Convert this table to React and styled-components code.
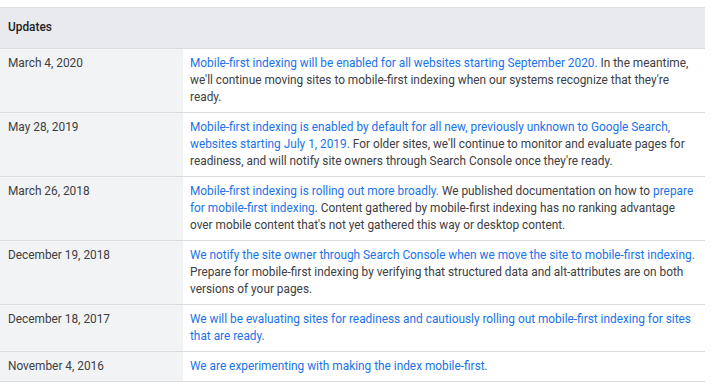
import React from 'react';
import styled, { createGlobalStyle } from 'styled-components';

const GlobalStyle = createGlobalStyle`
  body {
    margin: 0;
    background: #fff;
    font-family: Roboto, "Liberation Sans", sans-serif;
    -webkit-font-smoothing: antialiased;
  }
`;

const Page = styled.div`
  padding-top: 7px;
`;

const Table = styled.table`
  width: 705px;
  border-collapse: collapse;
  font-size: 11.85px;
  line-height: 17px;
  color: #3c4043;
  border-top: 1px solid #e0e0e0;
`;

const HeadCell = styled.th`
  background: #e8eaed;
  text-align: left;
  font-weight: 500;
  color: #202124;
  padding: 11px 8px 12px;
  border-bottom: 1px solid #dadce0;
`;

const Row = styled.tr`
  border-bottom: 1px solid #dadce0;
`;

const DateCell = styled.td`
  width: 167px;
  background: #f1f3f4;
  padding: 6px 8px;
  vertical-align: top;
  color: #3c4043;
`;

const TextCell = styled.td`
  padding: 6px 6px 6px 7px;
  vertical-align: top;
  color: #3c4043;
`;

const Link = styled.a`
  color: #1a73e8;
  text-decoration: none;
`;

const updates = [
  {
    date: 'March 4, 2020',
    body: [
      { link: 'Mobile-first indexing will be enabled for all websites starting September 2020.' },
      " In the meantime, we'll continue moving sites to mobile-first indexing when our systems recognize that they're ready.",
    ],
  },
  {
    date: 'May 28, 2019',
    body: [
      { link: 'Mobile-first indexing is enabled by default for all new, previously unknown to Google Search, websites starting July 1, 2019.' },
      " For older sites, we'll continue to monitor and evaluate pages for readiness, and will notify site owners through Search Console once they're ready.",
    ],
  },
  {
    date: 'March 26, 2018',
    body: [
      { link: 'Mobile-first indexing is rolling out more broadly.' },
      ' We published documentation on how to ',
      { link: 'prepare for mobile-first indexing' },
      ". Content gathered by mobile-first indexing has no ranking advantage over mobile content that's not yet gathered this way or desktop content.",
    ],
  },
  {
    date: 'December 19, 2018',
    body: [
      { link: 'We notify the site owner through Search Console when we move the site to mobile-first indexing.' },
      ' Prepare for mobile-first indexing by verifying that structured data and alt-attributes are on both versions of your pages.',
    ],
  },
  {
    date: 'December 18, 2017',
    body: [
      { link: 'We will be evaluating sites for readiness and cautiously rolling out mobile-first indexing for sites that are ready.' },
    ],
  },
  {
    date: 'November 4, 2016',
    body: [
      { link: 'We are experimenting with making the index mobile-first.' },
    ],
  },
];

const App = () => (
  <Page>
    <GlobalStyle />
    <Table>
      <thead>
        <tr>
          <HeadCell colSpan={2}>Updates</HeadCell>
        </tr>
      </thead>
      <tbody>
        {updates.map((u) => (
          <Row key={u.date}>
            <DateCell>{u.date}</DateCell>
            <TextCell>
              {u.body.map((part, i) => (typeof part === 'string'
                ? <React.Fragment key={i}>{part}</React.Fragment>
                : <Link key={i} href="#">{part.link}</Link>))}
            </TextCell>
          </Row>
        ))}
      </tbody>
    </Table>
  </Page>
);

export default App;
